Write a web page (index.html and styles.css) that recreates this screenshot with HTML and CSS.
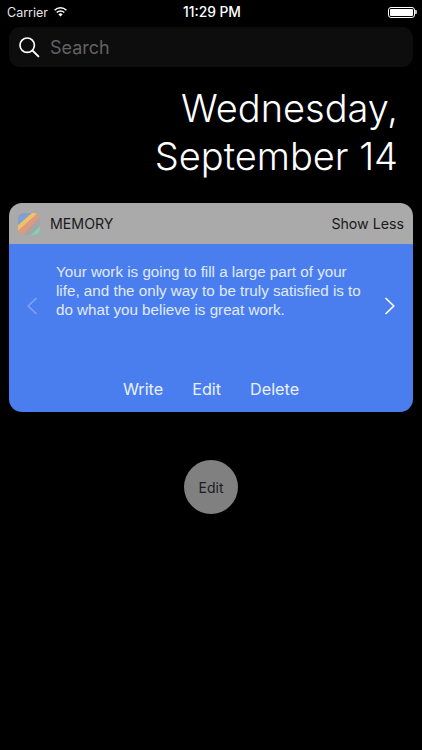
FILE: index.html
```html
<!DOCTYPE html>
<html lang="en">
<head>
<meta charset="utf-8">
<title>Memory widget</title>
<link rel="stylesheet" href="styles.css">
</head>
<body>
<div class="status">
  <div class="status-left">
    <span>Carrier</span>
    <svg class="wifi" width="15" height="11" viewBox="0 0 15 11"><path d="M7.5 10.6 5.4 8.4a3 3 0 0 1 4.2 0Z" fill="#fff"/><path d="M3.7 6.5a5.4 5.4 0 0 1 7.6 0M1.6 4.2a8.4 8.4 0 0 1 11.8 0" fill="none" stroke="#fff" stroke-width="1.5"/></svg>
  </div>
  <div class="status-time">11:29 PM</div>
  <div class="status-right">
    <div class="battery"><div class="battery-fill"></div></div>
    <div class="battery-tip"></div>
  </div>
</div>
<div class="search">
  <svg class="search-icon" width="22" height="22" viewBox="0 0 22 22"><circle cx="9.2" cy="9.2" r="7.2" fill="none" stroke="#fff" stroke-width="1.7"/><path d="M14.6 14.6 20.4 20.4" fill="none" stroke="#fff" stroke-width="2" stroke-linecap="round"/></svg>
  <span class="search-text">Search</span>
</div>
<div class="date">Wednesday,<br>September 14</div>
<section class="card">
  <header class="card-head">
    <svg class="logo" width="24" height="24" viewBox="0 0 24 24">
      <defs><clipPath id="logo-clip"><rect x="1" y="1" width="22" height="22" rx="6"/></clipPath></defs>
      <g clip-path="url(#logo-clip)">
        <rect width="24" height="24" fill="#a3a5a6"/>
        <path d="M0 0H16L0 14Z" fill="#82a0cf"/>
        <path d="M0 14 16 0H22L0 20Z" fill="#edc268"/>
        <path d="M0 20 22 0H25V3L5 24H0Z" fill="#e0997c"/>
        <path d="M13 24 25 12V24Z" fill="#82cfb3"/>
      </g>
    </svg>
    <span class="card-title">MEMORY</span>
    <span class="card-toggle">Show Less</span>
  </header>
  <div class="card-body">
    <div class="quote-row">
      <svg class="chev chev-dim" width="12" height="20" viewBox="0 0 12 20"><path d="M10.5 2 2.2 10l8.3 8" fill="none" stroke="currentColor" stroke-width="1.6"/></svg>
      <p class="quote">Your work is going to fill a large part of your life, and the only way to be truly satisfied is to do what you believe is great work.</p>
      <svg class="chev chev-next" width="12" height="20" viewBox="0 0 12 20"><path d="M1.5 2 9.8 10l-8.3 8" fill="none" stroke="currentColor" stroke-width="1.6"/></svg>
    </div>
    <div class="actions">
      <span>Write</span><span>Edit</span><span>Delete</span>
    </div>
  </div>
</section>
<div class="edit-wrap"><div class="edit-btn">Edit</div></div>
</body>
</html>
```
FILE: styles.css
```css
* { box-sizing: border-box; }
html, body { margin: 0; height: 100%; }
body {
  background: #000;
  color: #fff;
  font-family: Inter, "Liberation Sans", sans-serif;
  overflow: hidden;
}
.status {
  height: 27px;
  display: grid;
  grid-template-columns: 1fr auto 1fr;
  align-items: center;
  padding: 0 5px 3px 7px;
  font-size: 12.5px;
}
.status-left { display: flex; align-items: center; gap: 5px; color: #e8e8e8; }
.wifi { margin-top: -2px; }
.status-time { font-weight: 500; font-size: 13.8px; }
.status-right { display: flex; justify-content: flex-end; align-items: center; }
.battery { width: 27px; height: 11px; border: 1px solid #fff; border-radius: 3px; padding: 1px; }
.battery-fill { width: 100%; height: 100%; background: #fff; border-radius: 1px; }
.battery-tip { width: 2px; height: 4px; background: #bbb; border-radius: 0 1px 1px 0; }
.search {
  margin: 0 9px 0 9px;
  height: 40px;
  background: #0d0d0d;
  border-radius: 11px;
  display: flex;
  align-items: center;
  padding-left: 9px;
  gap: 10px;
}
.search-text { font-size: 18px; color: #626262; }
.date {
  margin-top: 17px;
  padding-right: 24px;
  text-align: right;
  font-size: 38px;
  line-height: 48px;
  font-weight: 300;
}
.card {
  margin: 23px 9px 0;
  height: 209px;
  border-radius: 13px;
  overflow: hidden;
  display: flex;
  flex-direction: column;
}
.card-head {
  height: 41px;
  background: #aaaaaa;
  color: #1a1a1a;
  display: flex;
  align-items: center;
  padding: 0 9px 0 8px;
  font-size: 14.2px;
}
.logo { margin-right: 9px; }
.card-title { flex: 1; }
.card-body {
  flex: 1;
  background: #4a7eee;
  display: flex;
  flex-direction: column;
  justify-content: space-between;
}
.quote-row {
  display: flex;
  align-items: flex-start;
  padding: 18px 17px 0 17px;
}
.chev { flex: none; margin-top: 34px; color: #fff; }
.chev-dim { color: #7fa4f3; }
.chev-next { margin-left: -1px; }
.quote {
  margin: 0 16px 0 18px;
  flex: 1;
  font-family: "Liberation Sans", sans-serif;
  font-size: 15.2px;
  line-height: 19px;
  color: #e0eafc;
}
.actions {
  display: flex;
  justify-content: center;
  gap: 29px;
  padding-bottom: 13px;
  font-size: 16.2px;
  color: #eaf1fe;
}
.edit-wrap { display: flex; justify-content: center; margin-top: 48px; }
.edit-btn {
  width: 54px;
  height: 54px;
  border-radius: 50%;
  background: #808080;
  color: #1c1c1c;
  display: flex;
  align-items: center;
  justify-content: center;
  font-size: 14px;
}
```
